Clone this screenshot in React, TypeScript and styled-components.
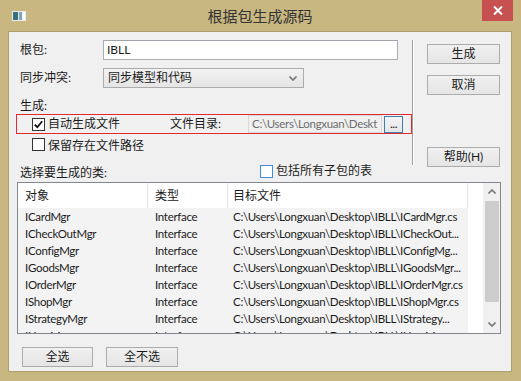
import React from "react";
import styled, { createGlobalStyle } from "styled-components";

const GlobalStyle = createGlobalStyle`
  html, body { margin: 0; padding: 0; background: #c9b782; }
  body {
    font-family: Lato, "Noto Sans CJK SC", sans-serif;
    font-size: 12px;
    color: #1b1b1b;
  }
  * { box-sizing: border-box; }
`;

const Window = styled.div`
  width: 521px;
  height: 381px;
  background: #c9b782;
  display: flex;
  flex-direction: column;
  padding: 0 9px 9px 8px;
  overflow: hidden;
`;

const TitleBar = styled.div`
  height: 31px;
  display: grid;
  grid-template-columns: 1fr auto 1fr;
  align-items: center;
`;

const IconCell = styled.div`
  padding-left: 4px;
  padding-top: 1px;
  display: flex;
`;

const Title = styled.div`
  font-family: "Noto Sans CJK SC", sans-serif;
  font-size: 15px;
  color: #333;
  line-height: 20px;
`;

const CloseButton = styled.div`
  justify-self: end;
  align-self: start;
  width: 31px;
  height: 21px;
  margin-right: -1px;
  background: #c75050;
  display: flex;
  align-items: center;
  justify-content: center;
`;

const Client = styled.div`
  flex: 1;
  background: #f0f0f0;
  border: 1px solid #b09f6e;
  display: flex;
  flex-direction: column;
  padding: 8px 11px 0 7px;
`;

const Top = styled.div`
  display: flex;
  align-items: flex-start;
`;

const Form = styled.div`
  width: 396px;
  display: flex;
  flex-direction: column;
`;

const FieldRow = styled.div<{ $gap?: number }>`
  display: flex;
  align-items: center;
  height: 20px;
  padding-left: 4px;
  margin-top: ${(p) => p.$gap ?? 0}px;
`;

const FieldLabel = styled.div`
  width: 83px;
  line-height: 16px;
`;

const TextBox = styled.div`
  width: 295px;
  height: 20px;
  background: #fff;
  border: 1px solid #abadb3;
  border-top-color: #a0a3aa;
  padding-left: 3px;
  line-height: 18px;
`;

const Combo = styled.div`
  width: 201px;
  height: 20px;
  border: 1px solid #acacac;
  background: linear-gradient(#f2f2f2, #e5e5e5);
  display: flex;
  align-items: center;
  justify-content: space-between;
  padding: 0 6px 0 4px;
  line-height: 18px;
`;

const SectionLabel = styled.div`
  margin-top: 10px;
  height: 16px;
  line-height: 16px;
  padding-left: 4px;
`;

const Highlight = styled.div`
  height: 20px;
  border: 1px solid #df2a33;
  display: flex;
  align-items: center;
  padding-left: 15px;
`;

const CheckItem = styled.div<{ $w?: number }>`
  display: flex;
  align-items: center;
  width: ${(p) => (p.$w ? `${p.$w}px` : "auto")};
  line-height: 16px;
`;

const Box = styled.div<{ $blue?: boolean }>`
  width: 13px;
  height: 13px;
  flex: none;
  background: #fff;
  border: 1px solid ${(p) => (p.$blue ? "#3d8ee0" : "#333")};
  margin-right: 3px;
  display: flex;
  align-items: center;
  justify-content: center;
`;

const DirLabel = styled.div`
  width: 78px;
  line-height: 16px;
`;

const PathBox = styled.div`
  width: 134px;
  height: 18px;
  border: 1px solid #d9d9d9;
  color: #6d6d6d;
  padding-left: 3px;
  line-height: 16px;
  font-size: 11.5px;
  letter-spacing: -0.3px;
  white-space: nowrap;
  overflow: hidden;
`;

const Browse = styled.div`
  width: 19px;
  height: 17px;
  margin-left: 2px;
  border: 1px solid #3c7fb1;
  background: linear-gradient(#f4f4f4, #e6e6e6);
  display: flex;
  align-items: flex-end;
  justify-content: center;
  line-height: 12px;
  padding-bottom: 2px;
  font-size: 12px;
  letter-spacing: -0.5px;
`;

const CheckRow = styled.div`
  margin-top: 3px;
  height: 14px;
  display: flex;
  align-items: center;
  padding-left: 16px;
`;

const SelectRow = styled.div`
  margin-top: 12px;
  height: 16px;
  display: flex;
  align-items: center;
  padding-left: 4px;
`;

const SelectLabel = styled.div`
  width: 240px;
  line-height: 16px;
  padding-top: 3px;
`;

const Separator = styled.div`
  width: 2px;
  height: 125px;
  border-left: 1px solid #a0a0a0;
  border-right: 1px solid #ffffff;
`;

const Side = styled.div`
  display: flex;
  flex-direction: column;
  padding: 4px 0 0 13px;
`;

const Button = styled.div<{ $w: number; $gap?: number }>`
  width: ${(p) => p.$w}px;
  height: 20px;
  margin-top: ${(p) => p.$gap ?? 0}px;
  border: 1px solid #acacac;
  background: linear-gradient(#f0f0f0, #e5e5e5);
  display: flex;
  align-items: center;
  justify-content: center;
  line-height: 16px;
`;

const List = styled.div`
  margin: 3px -1px 0 1px;
  height: 152px;
  border: 1px solid #828790;
  background: #fff;
  display: flex;
  overflow: hidden;
`;

const Table = styled.div`
  flex: 1;
  display: flex;
  flex-direction: column;
  overflow: hidden;
`;

const HeaderRow = styled.div`
  height: 25px;
  display: flex;
  flex: none;
`;

const HeadCell = styled.div<{ $w: number; $pad: number }>`
  width: ${(p) => p.$w}px;
  padding-left: ${(p) => p.$pad}px;
  border-right: 1px solid #e5e5e5;
  display: flex;
  align-items: center;
  line-height: 16px;
`;

const Row = styled.div`
  height: 17px;
  flex: none;
  width: 450px;
  background: #f3f3f3;
  display: flex;
`;

const Cell = styled.div<{ $w: number; $pad: number }>`
  width: ${(p) => p.$w}px;
  padding-left: ${(p) => p.$pad}px;
  line-height: 17px;
  font-size: 11.5px;
  letter-spacing: -0.3px;
  white-space: nowrap;
  overflow: hidden;
`;

const ScrollBar = styled.div`
  width: 17px;
  flex: none;
  display: flex;
  flex-direction: column;
  background: #f0f0f0;
  border-left: 1px solid #f0f0f0;
`;

const Arrow = styled.div`
  height: 17px;
  display: flex;
  align-items: center;
  justify-content: center;
  background: #f0f0f0;
`;

const Track = styled.div`
  flex: 1;
  padding: 1px 1px;
`;

const Thumb = styled.div`
  height: 101px;
  background: #cdcdcd;
`;

const Bottom = styled.div`
  margin-top: 13px;
  display: flex;
  gap: 13px;
  padding-left: 6px;
`;

const Check = () => (
  <svg width="9" height="9" viewBox="0 0 9 9">
    <polyline points="0.8,4.6 3.3,7.2 8.2,1.2" fill="none" stroke="#111" strokeWidth="1.8" />
  </svg>
);

const Chevron = ({ up }: { up?: boolean }) => (
  <svg width="8" height="5" viewBox="0 0 8 5">
    <polyline
      points={up ? "0.5,4.5 4,1 7.5,4.5" : "0.5,0.5 4,4 7.5,0.5"}
      fill="none"
      stroke="#777"
      strokeWidth="1.6"
    />
  </svg>
);

const rows: [string, string][] = [
  ["ICardMgr", "C:\\Users\\Longxuan\\Desktop\\IBLL\\ICardMgr.cs"],
  ["ICheckOutMgr", "C:\\Users\\Longxuan\\Desktop\\IBLL\\ICheckOut..."],
  ["IConfigMgr", "C:\\Users\\Longxuan\\Desktop\\IBLL\\IConfigMg..."],
  ["IGoodsMgr", "C:\\Users\\Longxuan\\Desktop\\IBLL\\IGoodsMgr..."],
  ["IOrderMgr", "C:\\Users\\Longxuan\\Desktop\\IBLL\\IOrderMgr.cs"],
  ["IShopMgr", "C:\\Users\\Longxuan\\Desktop\\IBLL\\IShopMgr.cs"],
  ["IStrategyMgr", "C:\\Users\\Longxuan\\Desktop\\IBLL\\IStrategy..."],
  ["IUserMgr", "C:\\Users\\Longxuan\\Desktop\\IBLL\\IUserMgr..."],
];

export default function App() {
  return (
    <>
      <GlobalStyle />
      <Window>
        <TitleBar>
          <IconCell>
            <svg width="14" height="10" viewBox="0 0 14 10">
              <rect x="0" y="0" width="14" height="10" fill="#e8ecec" />
              <rect x="1" y="1" width="5" height="8" fill="#3f6e7c" />
              <rect x="7" y="1" width="3" height="8" fill="#7fa9b2" />
              <rect x="11" y="1" width="2" height="8" fill="#ffffff" />
            </svg>
          </IconCell>
          <Title>根据包生成源码</Title>
          <CloseButton>
            <svg width="10" height="9" viewBox="0 0 10 9">
              <path d="M1 0.5 L9 8.5 M9 0.5 L1 8.5" stroke="#fff" strokeWidth="2" />
            </svg>
          </CloseButton>
        </TitleBar>
        <Client>
          <Top>
            <Form>
              <FieldRow>
                <FieldLabel>根包:</FieldLabel>
                <TextBox>IBLL</TextBox>
              </FieldRow>
              <FieldRow $gap={8}>
                <FieldLabel>同步冲突:</FieldLabel>
                <Combo>
                  <span>同步模型和代码</span>
                  <Chevron />
                </Combo>
              </FieldRow>
              <SectionLabel>生成:</SectionLabel>
              <Highlight>
                <CheckItem $w={138}>
                  <Box>
                    <Check />
                  </Box>
                  自动生成文件
                </CheckItem>
                <DirLabel>文件目录:</DirLabel>
                <PathBox>C:\Users\Longxuan\Deskt</PathBox>
                <Browse>...</Browse>
              </Highlight>
              <CheckRow>
                <Box />
                保留存在文件路径
              </CheckRow>
              <SelectRow>
                <SelectLabel>选择要生成的类:</SelectLabel>
                <CheckItem>
                  <Box $blue />
                  包括所有子包的表
                </CheckItem>
              </SelectRow>
            </Form>
            <Separator />
            <Side>
              <Button $w={73}>生成</Button>
              <Button $w={73} $gap={11}>
                取消
              </Button>
              <Button $w={73} $gap={52}>
                帮助(H)
              </Button>
            </Side>
          </Top>
          <List>
            <Table>
              <HeaderRow>
                <HeadCell $w={130} $pad={7}>对象</HeadCell>
                <HeadCell $w={80} $pad={7}>类型</HeadCell>
                <HeadCell $w={240} $pad={5}>目标文件</HeadCell>
              </HeaderRow>
              {rows.map(([name, path]) => (
                <Row key={name}>
                  <Cell $w={130} $pad={7}>{name}</Cell>
                  <Cell $w={80} $pad={7}>Interface</Cell>
                  <Cell $w={240} $pad={5}>{path}</Cell>
                </Row>
              ))}
            </Table>
            <ScrollBar>
              <Arrow>
                <Chevron up />
              </Arrow>
              <Track>
                <Thumb />
              </Track>
              <Arrow>
                <Chevron />
              </Arrow>
            </ScrollBar>
          </List>
          <Bottom>
            <Button $w={71}>全选</Button>
            <Button $w={72}>全不选</Button>
          </Bottom>
        </Client>
      </Window>
    </>
  );
}
